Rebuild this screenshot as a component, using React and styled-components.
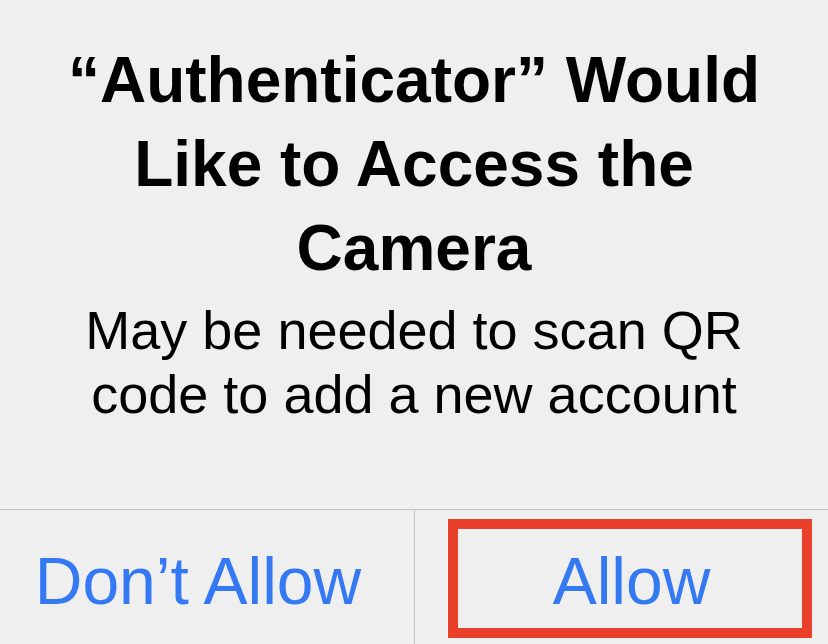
import React from 'react';
import styled, { createGlobalStyle } from 'styled-components';

const GlobalStyle = createGlobalStyle`
  html, body {
    margin: 0;
    padding: 0;
    background: #efefef;
    overflow: hidden;
  }
`;

const Alert = styled.div`
  width: 828px;
  height: 644px;
  display: flex;
  flex-direction: column;
  background: #efefef;
  font-family: "Liberation Sans", Arial, sans-serif;
  color: #000000;
  overflow: hidden;
`;

const Content = styled.div`
  padding: 38px 20px 0;
  height: 509px;
  flex-shrink: 0;
  box-sizing: border-box;
  text-align: center;
`;

const Title = styled.h1`
  margin: 0;
  font-size: 64px;
  line-height: 84px;
  font-weight: 700;
  letter-spacing: 0;
`;

const Message = styled.p`
  margin: 8px 0 0;
  font-size: 54px;
  line-height: 64px;
  font-weight: 400;
`;

const Actions = styled.div`
  display: grid;
  grid-template-columns: 414px 1fr;
  border-top: 1px solid #c4c4c6;
  height: 141px;
  flex-shrink: 0;
`;

const Action = styled.button`
  position: relative;
  border: 0;
  border-left: ${(p) => (p.$divided ? '1px solid #c4c4c6' : '0')};
  background: transparent;
  padding: ${(p) => (p.$divided ? '0 0 0 20px' : '0 18px 0 0')};
  margin: 0;
  font-family: "Liberation Sans", Arial, sans-serif;
  font-size: 66px;
  font-weight: 400;
  color: #3479f3;
  display: flex;
  align-items: center;
  justify-content: center;
`;

const Highlight = styled.span`
  position: absolute;
  left: 33px;
  top: 9px;
  width: 364px;
  height: 119px;
  box-sizing: border-box;
  border: 10px solid #e8402a;
  pointer-events: none;
`;

export default function App() {
  return (
    <>
      <GlobalStyle />
      <Alert>
        <Content>
          <Title>
            “Authenticator” Would
            <br />
            Like to Access the
            <br />
            Camera
          </Title>
          <Message>
            May be needed to scan QR
            <br />
            code to add a new account
          </Message>
        </Content>
        <Actions>
          <Action>Don’t Allow</Action>
          <Action $divided>
            Allow
            <Highlight />
          </Action>
        </Actions>
      </Alert>
    </>
  );
}
